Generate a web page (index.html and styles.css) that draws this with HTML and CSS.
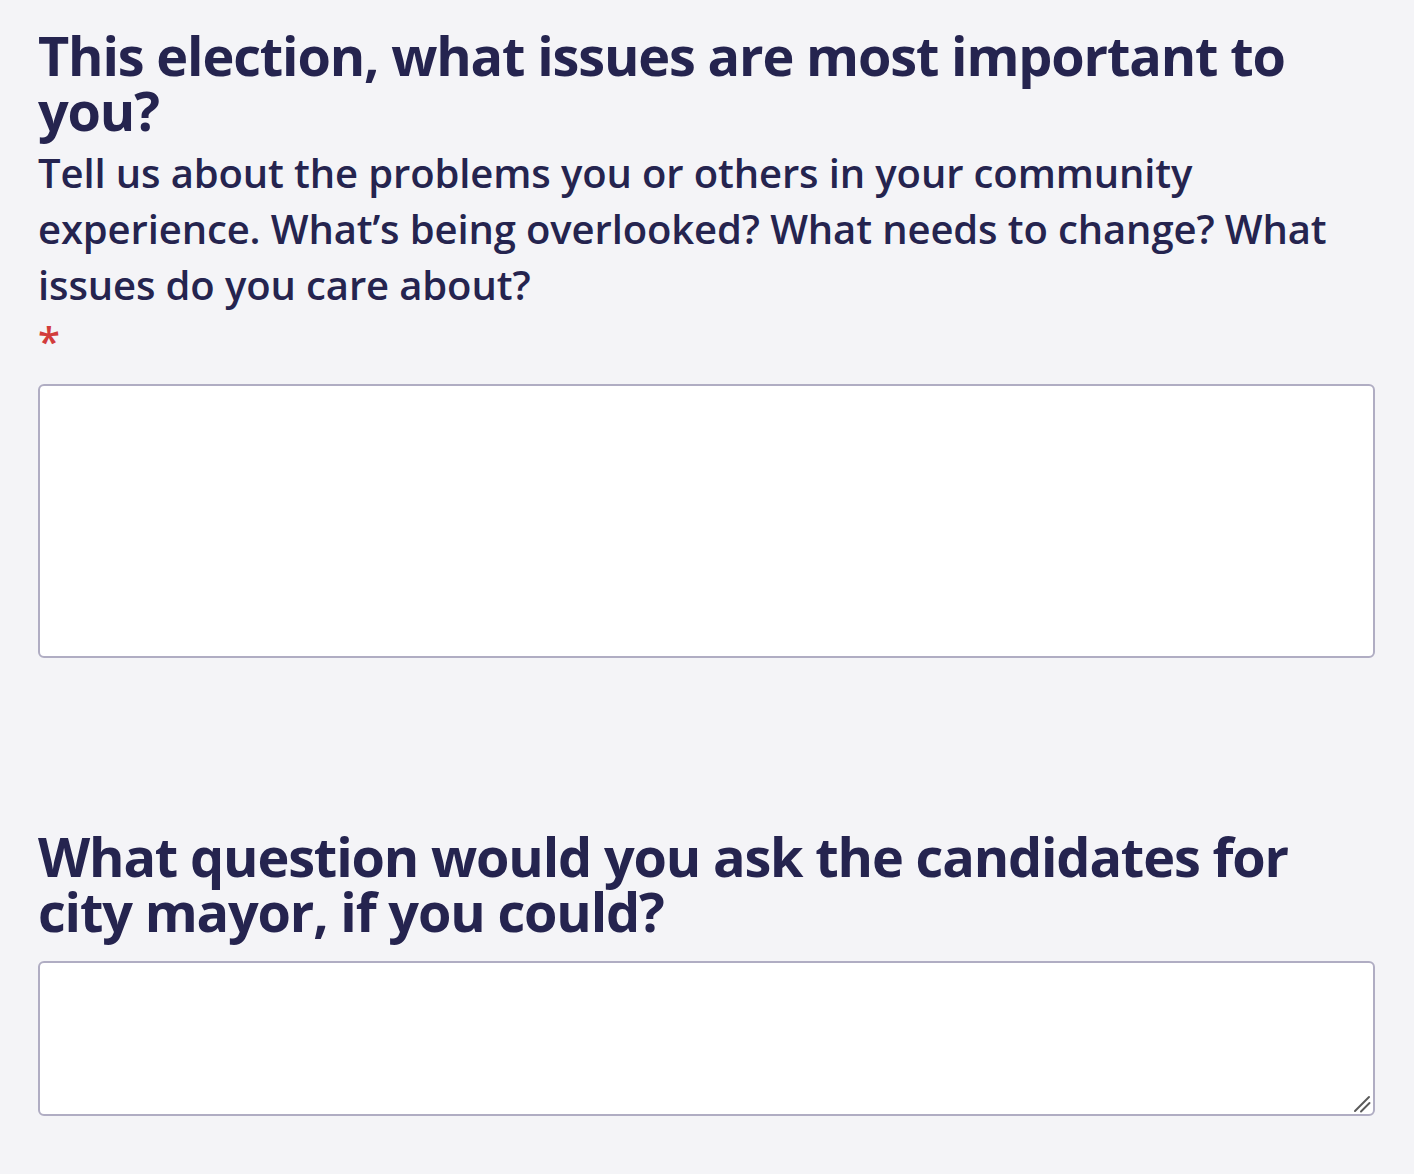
FILE: index.html
```html
<!DOCTYPE html>
<html lang="en">
<head>
<meta charset="utf-8">
<title>Survey</title>
<link rel="stylesheet" href="styles.css">
</head>
<body>
<form class="form">
  <div class="field">
    <label class="question" for="q1">This election, what issues are most important to you?</label>
    <p class="help">Tell us about the problems you or others in your community experience. What’s being overlooked? What needs to change? What issues do you care about?</p>
    <span class="required">*</span>
    <textarea id="q1" class="input input-large"></textarea>
  </div>
  <div class="field field-second">
    <label class="question question-second" for="q2">What question would you ask the candidates for city mayor, if you could?</label>
    <div class="input-wrap">
      <textarea id="q2" class="input input-small"></textarea>
      <svg class="grip" width="18" height="18" viewBox="0 0 18 18" aria-hidden="true">
        <line x1="2" y1="16" x2="16" y2="2" stroke="#5a5a5a" stroke-width="2" stroke-linecap="round"/>
        <line x1="8" y1="16.5" x2="16.5" y2="8" stroke="#5a5a5a" stroke-width="2" stroke-linecap="round"/>
      </svg>
    </div>
  </div>
</form>
</body>
</html>
```
FILE: styles.css
```css
html, body {
  margin: 0;
  padding: 0;
  background: #f4f4f7;
}
body {
  font-family: "Open Sans", "Noto Sans", sans-serif;
  color: #25244f;
}
.form {
  padding: 28px 39px 0 38px;
  display: flex;
  flex-direction: column;
}
.field {
  display: flex;
  flex-direction: column;
}
.field-second {
  margin-top: 171px;
}
.question {
  display: block;
  font-weight: 700;
  font-size: 54px;
  line-height: 55px;
  letter-spacing: -1.15px;
}
.help {
  margin: 7px 0 0;
  font-weight: 600;
  font-size: 40px;
  line-height: 56px;
  letter-spacing: -0.12px;
}
.required {
  display: block;
  color: #d23c3c;
  font-weight: 600;
  font-size: 40px;
  line-height: 56px;
}
.input {
  display: block;
  box-sizing: border-box;
  width: 100%;
  background: #ffffff;
  border: 2px solid #b0adc3;
  border-radius: 6px;
  margin: 0;
  padding: 12px;
  font-family: inherit;
  font-size: 32px;
  color: #25244f;
  outline: none;
  resize: none;
}
.input-large {
  margin-top: 15px;
  height: 274px;
}
.input-wrap {
  position: relative;
  margin-top: 22px;
}
.input-small {
  height: 155px;
}
.grip {
  position: absolute;
  right: 4px;
  bottom: 3px;
  pointer-events: none;
}
```
